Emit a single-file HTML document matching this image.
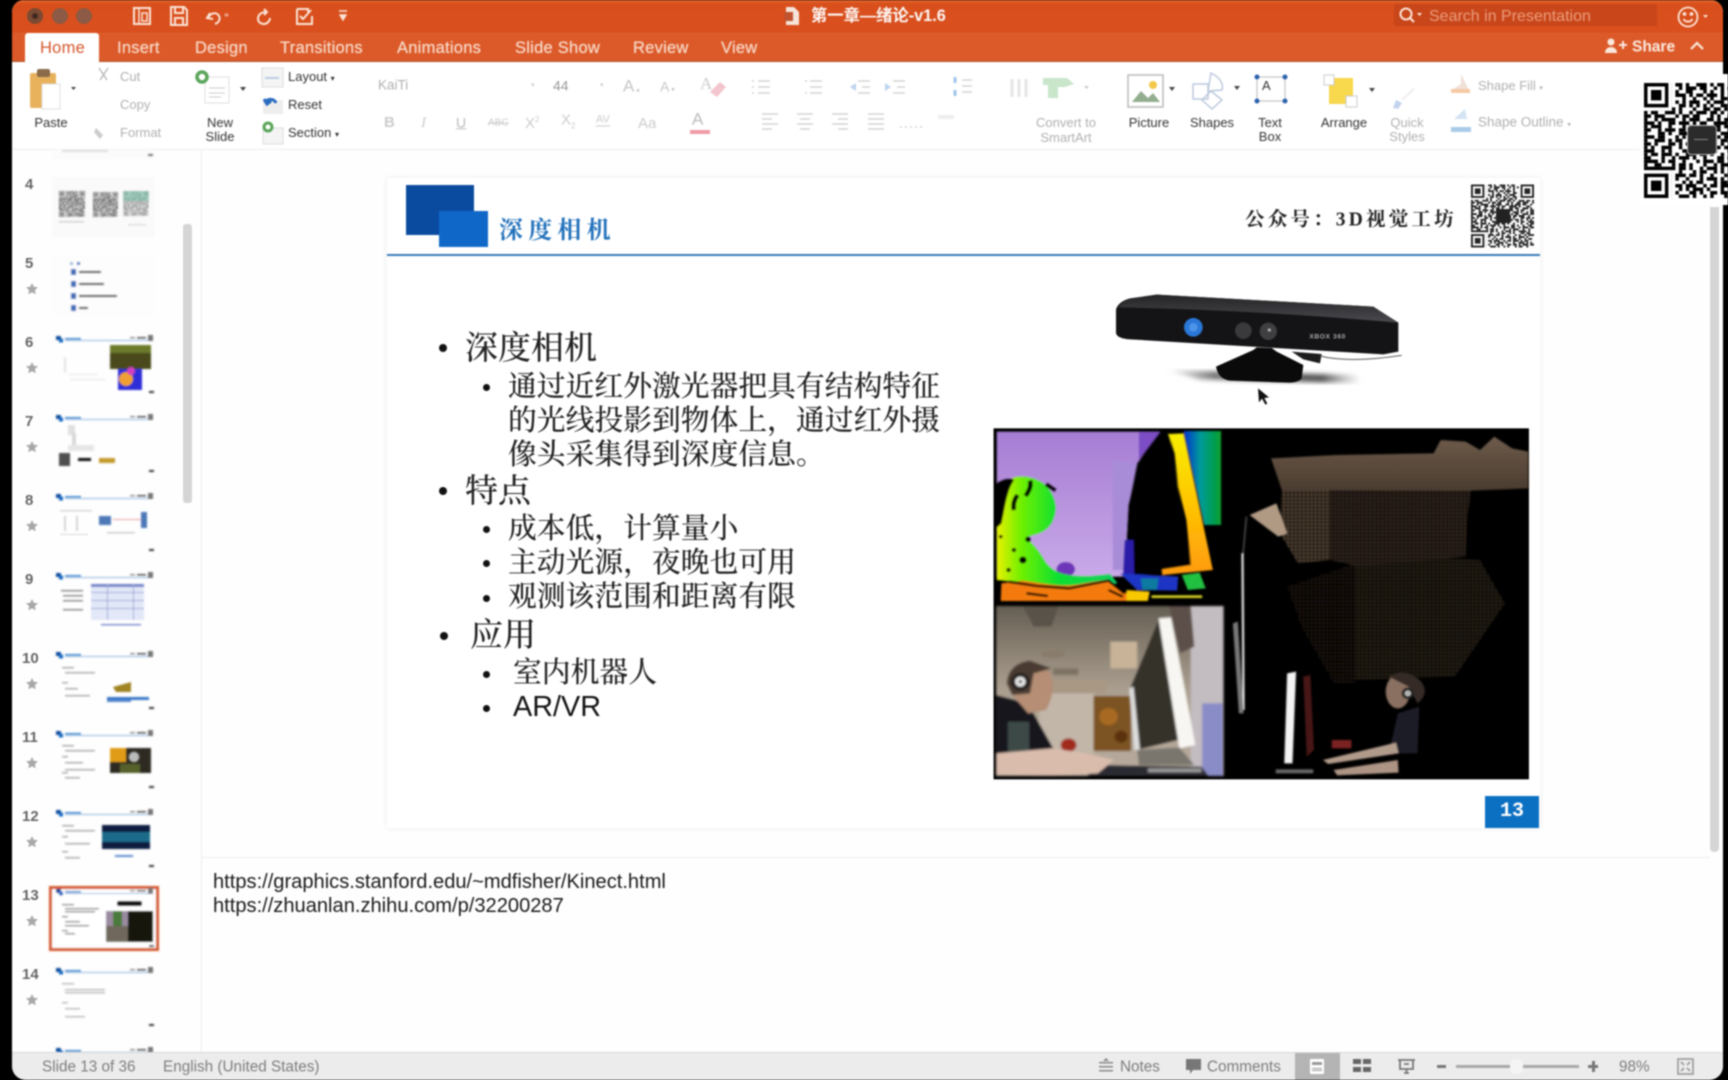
<!DOCTYPE html>
<html lang="zh"><head><meta charset="utf-8"><title>第一章—绪论-v1.6</title>
<style>
html,body{margin:0;padding:0;width:1728px;height:1080px;overflow:hidden;background:#000}
body{font-family:"Liberation Sans","Noto Sans CJK SC",sans-serif;position:relative}
#w{position:absolute;left:0;top:0;width:1728px;height:1080px;filter:blur(.7px)}
#win{position:absolute;left:12px;top:0;width:1711px;height:1080px;background:#fefefe;border-radius:12px 12px 14px 14px;overflow:hidden}
.a{position:absolute}
.t{position:absolute;white-space:nowrap;transform:translateY(-50%);line-height:1.1}
.c{transform:translate(-50%,-50%);text-align:center}
.tab{color:#f8d9c8;font-size:16.5px;top:47.5px;letter-spacing:.25px;text-shadow:0 0 .6px #f8d9c8}
.l{color:#333;font-size:13px}
.g{color:#b0b0b0;font-size:13px}
.st{color:#7d7d7d;font-size:15.3px;top:1067.5px}
.sl{font-family:"Liberation Serif","Noto Serif CJK SC",serif;color:#222;font-weight:500}
.s1{font-size:33px;left:465px}
.s2{font-size:28.8px;left:508px}
.b{position:absolute;border-radius:50%;background:#111}
.b1{width:8px;height:8px;left:439px}
.b2{width:7px;height:7px;left:483px}
svg{position:absolute;overflow:hidden}
</style></head><body>
<svg width="0" height="0" style="left:0;top:0">
<defs>
<symbol id="q" viewBox="0 0 33 33">
<g fill="none" stroke="#000" stroke-width="1">
<path d="M0 .5h33" stroke-dasharray="8 1 2 1 1 2 3 1 1 1 2 3 1 6"/>
<path d="M0 1.5h33" stroke-dasharray="8 2 1 1 3 1 2 2 1 1 1 1 2 8"/>
<path d="M0 2.5h33" stroke-dasharray="8 1 1 2 2 3 1 1 1 2 1 3 1 6"/>
<path d="M0 3.5h33" stroke-dasharray="8 1 3 1 1 1 2 1 3 1 1 2 2 6"/>
<path d="M0 4.5h33" stroke-dasharray="8 3 1 2 1 2 1 1 1 2 2 1 1 7"/>
<path d="M0 5.5h33" stroke-dasharray="8 1 1 1 1 1 3 2 1 1 3 2 1 7"/>
<path d="M0 6.5h33" stroke-dasharray="8 2 2 1 1 1 1 1 1 1 1 2 2 1 1 8"/>
<path d="M0 7.5h33" stroke-dasharray="9 1 1 3 1 2 2 1 2 1 1 2 1 7"/>
<path d="M0 8.5h33" stroke-dasharray="1 1 2 2 3 1 1 2 1 1 3 1 2 1 1 2 3 1 2"/>
<path d="M0 9.5h33" stroke-dasharray="2 1 3 3 1 1 2 1 2 3 1 1 1 2 2 1 3 2"/>
<path d="M0 10.5h33" stroke-dasharray="1 2 1 1 4 2 1 1 3 2 2 1 1 1 3 1 2 2"/>
<path d="M0 11.5h33" stroke-dasharray="3 1 1 2 2 1 3 1 1 1 2 2 4 1 1 3 2"/>
<path d="M0 12.5h33" stroke-dasharray="1 1 3 2 1 3 1 1 2 1 1 3 2 1 2 2 3 1"/>
<path d="M0 13.5h33" stroke-dasharray="2 2 1 1 3 1 2 2 1 2 1 1 3 2 1 1 2 3"/>
<path d="M0 14.5h33" stroke-dasharray="1 3 2 1 1 2 3 1 1 1 2 1 1 2 3 1 1 2 1"/>
<path d="M0 15.5h33" stroke-dasharray="3 1 2 3 1 1 1 2 2 1 3 1 1 1 2 2 3 1"/>
<path d="M0 16.5h33" stroke-dasharray="1 2 3 1 1 1 2 2 1 3 1 2 1 1 2 1 3 2"/>
<path d="M0 17.5h33" stroke-dasharray="2 1 1 3 2 1 1 1 3 1 2 2 1 1 1 3 2 1"/>
<path d="M0 18.5h33" stroke-dasharray="1 1 1 2 3 2 1 3 1 1 2 1 3 1 2 1 1 2"/>
<path d="M0 19.5h33" stroke-dasharray="3 2 1 1 1 3 2 1 2 1 1 2 1 3 1 1 2 2"/>
<path d="M0 20.5h33" stroke-dasharray="1 1 2 1 3 1 1 2 3 1 2 1 1 2 1 3 1 2"/>
<path d="M0 21.5h33" stroke-dasharray="2 3 1 2 1 1 3 1 1 2 1 3 2 1 1 2 1 2"/>
<path d="M0 22.5h33" stroke-dasharray="4 1 1 1 2 2 1 3 1 1 3 1 2 2 1 1 3 1"/>
<path d="M0 23.5h33" stroke-dasharray="1 2 2 3 1 1 2 1 1 3 1 2 1 1 3 2 1 2"/>
<path d="M0 24.5h33" stroke-dasharray="9 1 2 1 1 2 1 1 3 1 1 2 4 1 1 2"/>
<path d="M0 25.5h33" stroke-dasharray="8 2 1 3 1 1 2 2 1 1 1 3 2 1 2 2"/>
<path d="M0 26.5h33" stroke-dasharray="8 1 3 1 2 1 1 2 1 3 1 1 1 2 1 1 3"/>
<path d="M0 27.5h33" stroke-dasharray="8 1 1 2 1 3 1 1 3 1 1 2 3 1 1 3"/>
<path d="M0 28.5h33" stroke-dasharray="8 3 1 1 1 1 2 3 1 1 2 1 1 2 1 1 2 2"/>
<path d="M0 29.5h33" stroke-dasharray="8 1 2 1 3 2 1 1 2 1 3 1 1 1 2 3"/>
<path d="M0 30.5h33" stroke-dasharray="8 2 1 1 1 1 3 1 1 3 1 2 3 1 1 1 1"/>
<path d="M0 31.5h33" stroke-dasharray="8 1 1 3 2 1 1 2 2 1 2 1 1 1 3 1 2"/>
<path d="M0 32.5h33" stroke-dasharray="8 2 3 1 1 2 1 1 1 3 1 1 2 2 1 3"/>
</g>
<g fill="#fff">
<rect width="8" height="8"/><rect x="25" width="8" height="8"/><rect y="25" width="8" height="8"/>
</g>
<g fill="#000">
<path fill-rule="evenodd" d="M0 0h7v7H0zM1 1v5h5V1zM2 2h3v3H2z"/>
<path fill-rule="evenodd" d="M26 0h7v7h-7zM27 1v5h5V1zM28 2h3v3h-3z"/>
<path fill-rule="evenodd" d="M0 26h7v7H0zM1 27v5h5v-5zM2 28h3v3H2z"/>
</g>
</symbol>
<symbol id="h" viewBox="0 0 104 14" overflow="visible">
<rect x="4" y="1" width="5" height="4" fill="#0a4a9a"/><rect x="7" y="3.5" width="4" height="4" fill="#1468c4"/>
<rect x="13" y="5" width="88" height="1" fill="#8db6de"/>
<rect x="13" y="3" width="16" height="1.6" fill="#3f86cc"/>
<rect x="78" y="2" width="5" height="1.4" fill="#888"/><rect x="85" y="2" width="9" height="1.6" fill="#555"/>
<rect x="96" y="0" width="5" height="6" fill="#777"/>
</symbol>
<pattern id="m1" width="11" height="11" patternUnits="userSpaceOnUse">
<rect width="11" height="11" fill="#0b0906"/><rect x="1" y="1" width="7" height="7" rx="2" fill="#2a2118"/>
</pattern>
<pattern id="m0" width="11" height="11" patternUnits="userSpaceOnUse">
<rect width="11" height="11" fill="#060403"/><rect x="1" y="1" width="7" height="7" rx="2" fill="#1a130e"/>
</pattern>
<pattern id="m2" width="11" height="11" patternUnits="userSpaceOnUse">
<rect width="11" height="11" fill="#1e1710"/><rect x="1" y="1" width="7" height="7" rx="2" fill="#5a4a3a"/>
</pattern>
<pattern id="m3" width="11" height="11" patternUnits="userSpaceOnUse">
<rect width="11" height="11" fill="#120d09"/><rect x="1" y="1" width="7" height="7" rx="2" fill="#352a20"/>
</pattern>
<linearGradient id="lav" x1="0" y1="0" x2="0" y2="1"><stop offset="0" stop-color="#a67dd4"/><stop offset="1" stop-color="#c9a9e8"/></linearGradient>
<linearGradient id="yo" x1="0" y1="0" x2="0" y2="1"><stop offset="0" stop-color="#f8ee00"/><stop offset=".5" stop-color="#ffc400"/><stop offset="1" stop-color="#ff9a10"/></linearGradient>
<linearGradient id="bg" x1="0" y1="0" x2="1" y2="0"><stop offset="0" stop-color="#0030d0"/><stop offset=".45" stop-color="#009a9a"/><stop offset="1" stop-color="#08a02c"/></linearGradient>
<linearGradient id="pg" x1="0" y1="0" x2="1" y2="0"><stop offset="0" stop-color="#e8f000"/><stop offset=".2" stop-color="#70f000"/><stop offset=".5" stop-color="#10e030"/><stop offset="1" stop-color="#10d060"/></linearGradient>
<linearGradient id="ph" x1="0" y1="0" x2="0" y2="1"><stop offset="0" stop-color="#655e54"/><stop offset=".25" stop-color="#8a8072"/><stop offset=".5" stop-color="#ab9f90"/><stop offset="1" stop-color="#b8ab9d"/></linearGradient>
<linearGradient id="br" x1="0" y1="0" x2="0" y2="1"><stop offset="0" stop-color="#6d5a4a"/><stop offset="1" stop-color="#4a3c2f"/></linearGradient>
<linearGradient id="top" x1="0" y1="0" x2="0" y2="1"><stop offset="0" stop-color="#242426"/><stop offset="1" stop-color="#4a4a4f"/></linearGradient>
<linearGradient id="sh" x1="0" y1="0" x2="1" y2="0"><stop offset="0" stop-color="#999" stop-opacity="0"/><stop offset=".25" stop-color="#777"/><stop offset=".8" stop-color="#555"/><stop offset="1" stop-color="#999" stop-opacity="0"/></linearGradient>
<filter id="bl1"><feGaussianBlur stdDeviation="3.2"/></filter>
<filter id="bl4"><feGaussianBlur stdDeviation="2"/></filter>
<filter id="bl2"><feGaussianBlur stdDeviation="7"/></filter>
<filter id="bl3"><feGaussianBlur stdDeviation=".7"/></filter>
</defs>
</svg>
<div id="w">
<div id="win"></div>

<!-- title bar -->
<div class="a" style="left:12px;top:0;width:1711px;height:62px;border-radius:12px 12px 0 0;background:linear-gradient(#e4672f 0,#d84f1c 4px,#d94f1d 32px,#dc5a29 33px,#dc5a29 60px,#a8532f 62px)"></div>
<div class="a" style="left:27px;top:8px;width:16px;height:16px;border-radius:50%;background:#7a4a33"></div>
<div class="a" style="left:32px;top:13px;width:6px;height:6px;border-radius:50%;background:#3f2a20"></div>
<div class="a" style="left:52px;top:8px;width:16px;height:16px;border-radius:50%;background:#8c5a45"></div>
<div class="a" style="left:76px;top:8px;width:16px;height:16px;border-radius:50%;background:#8c5a45"></div>
<svg style="left:130px;top:4px" width="230" height="24" viewBox="0 0 230 24" fill="none" stroke="#fbe3d6" stroke-width="2">
<rect x="4" y="4" width="16" height="16"/><path d="M9 4v16M12 9h5v8h-5z" stroke-width="1.5"/>
<path d="M41 3h13l3 3v15H41zM45 3v6h8V3M45 21v-7h8v7"/>
<path d="M80 9l-3 5 6 1M78 14c3-6 9-6 11-2 2 4-1 7-4 8"/>
<path d="M95 11l3 0" stroke-width="3" stroke-dasharray="1 1"/>
<path d="M134 5l3 3-3 3M136 8c-5 0-8 3-8 7 0 3 3 5 6 5s6-3 6-6"/>
<path d="M167 5h11v3M167 5v15h15v-8M170 12l3 3 8-9"/>
<path d="M209 7h8M210 11h6l-3 5z" fill="#fbe3d6" stroke-width="1.4"/>
</svg>
<svg style="left:783px;top:5px" width="18" height="22" viewBox="0 0 18 22"><path d="M3 2h8l5 5v13H3z" fill="#f6e4da"/><path d="M1 7h9v9H1z" fill="#c0532f"/></svg>
<div class="t" style="left:811px;top:16.500px;color:#fff;font-weight:bold;font-size:16.3px;opacity:.95">第一章—绪论-v1.6</div>
<div class="a" style="left:1394px;top:4px;width:263px;height:22px;background:#c8461a;border-radius:2px"></div>
<svg style="left:1398px;top:6px" width="26" height="18" viewBox="0 0 26 18" fill="none" stroke="#fbe3d6" stroke-width="2"><circle cx="8" cy="8" r="5.5"/><path d="M12 12l4 4"/><path d="M19 7l2.500 3 2.500-3z" fill="#fbe3d6" stroke="none"/></svg>
<div class="t" style="left:1429px;top:17px;color:#ec9d7c;font-size:16px">Search in Presentation</div>
<svg style="left:1676px;top:5px" width="36" height="24" viewBox="0 0 36 24" fill="none" stroke="#fbe3d6" stroke-width="1.8"><circle cx="12" cy="12" r="9.500"/><path d="M7.500 14c2 3.500 7 3.500 9 0"/><circle cx="8.500" cy="9" r="1" fill="#fbe3d6"/><circle cx="15.500" cy="9" r="1" fill="#fbe3d6"/><path d="M27 10l2.500 3 2.500-3z" fill="#fbe3d6" stroke="none"/></svg>

<div class="a" style="left:25px;top:33px;width:74px;height:30px;background:#fff;border-radius:3px 3px 0 0"></div>
<div class="t tab" style="left:40px;color:#d4552a;text-shadow:none">Home</div>
<div class="t tab" style="left:117px">Insert</div>
<div class="t tab" style="left:195px">Design</div>
<div class="t tab" style="left:280px">Transitions</div>
<div class="t tab" style="left:397px">Animations</div>
<div class="t tab" style="left:515px">Slide Show</div>
<div class="t tab" style="left:633px">Review</div>
<div class="t tab" style="left:721px">View</div>
<svg style="left:1603px;top:37px" width="26" height="18" viewBox="0 0 26 18" fill="#fbe9de"><circle cx="8" cy="5" r="3.500"/><path d="M2 16c0-8 12-8 12 0z"/><path d="M16 7h3V4h2v3h3v2h-3v3h-2V9h-3z"/></svg>
<div class="t" style="left:1632px;top:47px;color:#fbe9de;font-size:15.500px;font-weight:bold">Share</div>
<svg style="left:1689px;top:41px" width="16" height="10" viewBox="0 0 16 10" fill="none" stroke="#fbe9de" stroke-width="2.200"><path d="M2 8l6-6 6 6"/></svg>

<!-- ribbon -->
<div class="a" style="left:12px;top:62px;width:1711px;height:87px;background:#fff;border-bottom:1px solid #eee"></div>
<svg style="left:25px;top:66px" width="60" height="46" viewBox="0 0 60 46">
<rect x="5" y="7" width="26" height="35" rx="2" fill="#e8b25c"/><rect x="12" y="3" width="13" height="8" rx="2" fill="#8a6a48"/>
<path d="M17 18h18v25H17z" fill="#fff" stroke="#ddd"/><path d="M46 21h5l-2.500 3z" fill="#444"/></svg>
<div class="t c l" style="left:51px;top:123px">Paste</div>
<svg style="left:96px;top:66px" width="16" height="16" viewBox="0 0 16 16" fill="none" stroke="#bbb" stroke-width="1.500"><path d="M3 2l8 12M12 2L4 14"/></svg>
<div class="t g" style="left:120px;top:77px">Cut</div>
<div class="t g" style="left:120px;top:105px">Copy</div>
<div class="t g" style="left:120px;top:133px">Format</div>
<svg style="left:92px;top:126px" width="18" height="16" viewBox="0 0 18 16"><path d="M4 2l7 7-3 4-6-7z" fill="#ccc"/></svg>
<svg style="left:193px;top:68px" width="60" height="38" viewBox="0 0 60 38"><rect x="12" y="9" width="24" height="26" fill="#fff" stroke="#ddd"/><path d="M16 20h16M16 25h16M16 29h12" stroke="#ccc"/><circle cx="9" cy="9" r="5" fill="#fff" stroke="#59a55a" stroke-width="3.500"/><path d="M47 19h6l-3 4z" fill="#444"/></svg>
<div class="t c l" style="left:220px;top:123px">New</div>
<div class="t c l" style="left:220px;top:137px">Slide</div>
<svg style="left:260px;top:66px" width="26" height="82" viewBox="0 0 26 82">
<rect x="2" y="2" width="21" height="19" fill="#f4f4f4" stroke="#ddd"/><path d="M5 12h14" stroke="#b9cde6" stroke-width="2"/>
<rect x="3" y="34" width="20" height="14" fill="#eee"/><path d="M5 37a6 6 0 0 1 11 0M4 33l3 5 4-3" stroke="#2a6cc0" stroke-width="3" fill="none"/>
<rect x="3" y="62" width="20" height="16" fill="#f4f4f4" stroke="#ddd"/><circle cx="8" cy="61" r="4" fill="#fff" stroke="#59a55a" stroke-width="3"/></svg>
<div class="t l" style="left:288px;top:77px">Layout <span style="font-size:8px">▾</span></div>
<div class="t l" style="left:288px;top:105px">Reset</div>
<div class="t l" style="left:288px;top:133px">Section <span style="font-size:8px">▾</span></div>
<div class="t g" style="left:378px;top:86px;font-size:13.500px">KaiTi</div>
<div class="t g" style="left:553px;top:86px;font-size:14px;color:#999">44</div>
<div class="t g" style="left:531px;top:86px;font-size:7px;color:#ccc">▾</div>
<div class="t g" style="left:600px;top:86px;font-size:7px;color:#ccc">▾</div>
<div class="t g" style="left:623px;top:87px;font-size:17px;color:#c6c6c6">A<span style="font-size:7px"> ▴</span></div>
<div class="t g" style="left:660px;top:87px;font-size:14px;color:#c6c6c6">A<span style="font-size:7px"> ▾</span></div>
<svg style="left:698px;top:72px" width="32" height="28" viewBox="0 0 32 28"><text x="2" y="17" font-size="17" fill="#ccc" font-family="Liberation Serif">A</text><path d="M12 20l10-10 6 5-9 10z" fill="#f3c5cc"/></svg>
<div class="t g" style="left:384px;top:123px;font-size:15px;font-weight:bold;color:#ccc">B</div>
<div class="t g" style="left:421px;top:123px;font-size:15px;font-style:italic;color:#ccc;font-family:'Liberation Serif'">I</div>
<div class="t g" style="left:456px;top:123px;font-size:14px;color:#bbb;text-decoration:underline">U</div>
<div class="t g" style="left:488px;top:123px;font-size:10px;color:#ccc;text-decoration:line-through">ABC</div>
<div class="t g" style="left:525px;top:124px;font-size:15px;color:#ccc">X<sup style="font-size:8px">2</sup></div>
<div class="t g" style="left:561px;top:122px;font-size:15px;color:#ccc">X<sub style="font-size:8px">2</sub></div>
<div class="t g" style="left:596px;top:120px;font-size:11px;color:#ccc;border-bottom:1px solid #ccc">AV</div>
<div class="t g" style="left:638px;top:124px;font-size:15px;color:#ccc">Aa</div>
<div class="t g" style="left:692px;top:120px;font-size:17px;color:#bbb">A</div>
<div class="a" style="left:690px;top:130px;width:20px;height:4px;background:#ef9ba6"></div>
<svg style="left:750px;top:72px" width="330" height="62" viewBox="0 0 330 62" fill="none" stroke="#d4d4d4" stroke-width="1.500">
<path d="M8 9h12M8 15h12M8 21h12M2 9h2M2 15h2M2 21h2"/><path d="M60 9h12M60 15h12M60 21h12M55 9h2M55 21h2"/>
<path d="M108 9h12M112 15h8M108 21h12"/><path d="M100 15l6-4v8z" fill="#bcd4ee" stroke="none"/>
<path d="M143 9h12M147 15h8M143 21h12"/><path d="M141 15l-6-4v8z" fill="#bcd4ee" stroke="none"/>
<path d="M212 8h10M212 14h10M212 20h10"/><path d="M205 5v6M205 18v6" stroke="#9fc5ea" stroke-width="3"/>
<path d="M262 7v18M269 7v18M276 7v18" stroke="#e6e6e6" stroke-width="3"/>
<path d="M12 42h16M12 47h10M12 52h16M12 57h10"/><path d="M47 42h16M50 47h10M47 52h16M50 57h10"/><path d="M82 42h16M88 47h10M82 52h16M88 57h10"/><path d="M118 42h16M118 47h16M118 52h16M118 57h16"/>
<path d="M150 55h24" stroke-dasharray="2 3"/><path d="M188 45h16" stroke="#eee" stroke-width="4"/>
</svg>
<svg style="left:1040px;top:76px" width="50" height="24" viewBox="0 0 50 24"><path d="M3 2h24l7 6-9 3h-7v11H8V9H3z" fill="#c9e6cb"/><path d="M44 10h5l-2.500 3z" fill="#ccc"/></svg>
<div class="t c g" style="left:1066px;top:123px">Convert to</div>
<div class="t c g" style="left:1066px;top:138px">SmartArt</div>
<svg style="left:1127px;top:74px" width="50" height="34" viewBox="0 0 50 34"><rect x="1" y="1" width="35" height="32" fill="#fff" stroke="#bbb" stroke-width="1.500"/><path d="M5 28l9-11 7 7 5-5 7 9z" fill="#93ad8f"/><circle cx="26" cy="11" r="4" fill="#f3c84a"/><path d="M42 13h6l-3 4z" fill="#444"/></svg>
<div class="t c l" style="left:1149px;top:123px">Picture</div>
<svg style="left:1190px;top:72px" width="52" height="38" viewBox="0 0 52 38" fill="#fff" stroke="#bcc9dc" stroke-width="1.500"><path d="M3 12h15v15H3zM21 1c8 4 13 10 11 17l-14 1zM21 19l11 9-10 9-10-9z"/><path d="M44 14h6l-3 4z" fill="#444" stroke="none"/></svg>
<div class="t c l" style="left:1212px;top:123px">Shapes</div>
<svg style="left:1253px;top:73px" width="36" height="32" viewBox="0 0 36 32" fill="#2b62ad"><path d="M4 4h28v24H4z" fill="#fff" stroke="#bbb"/><circle cx="4" cy="4" r="2.500"/><circle cx="32" cy="4" r="2.500"/><circle cx="4" cy="28" r="2.500"/><circle cx="32" cy="28" r="2.500"/><text x="9" y="17" font-size="13" font-family="Liberation Sans" fill="#333">A</text></svg>
<div class="t c l" style="left:1270px;top:123px">Text</div>
<div class="t c l" style="left:1270px;top:137px">Box</div>
<svg style="left:1322px;top:74px" width="56" height="34" viewBox="0 0 56 34"><rect x="7" y="4" width="24" height="26" fill="#f8d84c"/><rect x="2" y="1" width="10" height="10" fill="#fff" stroke="#ccc"/><rect x="24" y="22" width="11" height="11" fill="#fff" stroke="#ccc"/><path d="M47 14h6l-3 4z" fill="#444"/></svg>
<div class="t c l" style="left:1344px;top:123px">Arrange</div>
<svg style="left:1390px;top:86px" width="36" height="24" viewBox="0 0 36 24"><path d="M3 22l3-8 6 3-4 6z" fill="#c2d4ec"/><path d="M12 14L24 3" stroke="#eee" stroke-width="2"/></svg>
<div class="t c g" style="left:1407px;top:123px">Quick</div>
<div class="t c g" style="left:1407px;top:137px">Styles</div>
<svg style="left:1448px;top:72px" width="26" height="64" viewBox="0 0 26 64"><path d="M13 2v10l-9 6h17z" fill="#f0e0d8"/><rect x="3" y="17" width="19" height="4" fill="#f7c9a4"/><path d="M6 47L17 37l2 10z" fill="#d3e3f3"/><rect x="3" y="55" width="20" height="5" fill="#a9cbe8"/></svg>
<div class="t g" style="left:1478px;top:86px">Shape Fill <span style="font-size:7px">▾</span></div>
<div class="t g" style="left:1478px;top:123px;font-size:13.500px">Shape Outline <span style="font-size:7px">▾</span></div>

<!-- QR corner -->
<div class="a" style="left:1640px;top:74px;width:88px;height:131px;background:#fff"></div>
<svg style="left:1644px;top:83px" width="115" height="115"><use href="#q" width="115" height="115"/></svg>
<div class="a" style="left:1687px;top:125px;width:28px;height:28px;background:#2b2b2b;border-radius:4px;border:1px solid #bbb"></div>
<div class="a" style="left:1694px;top:139px;width:14px;height:1px;background:#888"></div>

<!-- left pane -->
<svg style="left:12px;top:149px" width="190" height="903" viewBox="12 149 190 903">
<g filter="url(#bl3)">
<rect x="52" y="150" width="103" height="9" fill="#fbfbfb"/><rect x="62" y="150" width="46" height="2" fill="#ddd"/><rect x="148" y="154" width="5" height="2" fill="#333"/>
<rect x="52" y="177" width="103" height="61" fill="#fafafa"/>
<use href="#q" x="59" y="191" width="26" height="26"/><use href="#q" x="93" y="192" width="25" height="25"/><use href="#q" x="123" y="191" width="26" height="25" opacity=".6"/>
<rect x="123" y="191" width="26" height="10" fill="#7ac9ae" opacity=".55"/>
<rect x="59" y="221" width="25" height="1.500" fill="#ccc"/><rect x="128" y="224" width="18" height="1.500" fill="#ddd"/>

<rect x="52" y="256" width="103" height="61" fill="#fdfdfd"/>
<g fill="#3a69b8"><rect x="70" y="262" width="3" height="3" opacity=".5"/><rect x="77" y="262" width="3" height="3"/><rect x="71" y="269" width="5" height="6"/><rect x="71" y="281" width="5" height="6"/><rect x="71" y="293" width="5" height="6"/><rect x="71" y="305" width="5" height="6"/></g>
<g fill="#222"><rect x="79" y="271" width="22" height="2"/><rect x="79" y="283" width="25" height="2"/><rect x="79" y="295" width="38" height="2"/><rect x="79" y="307" width="9" height="2"/></g>

<use href="#h" x="52" y="335" width="104" height="14"/>
<rect x="110" y="345" width="41" height="24" fill="#4a4a1c"/><rect x="110" y="345" width="41" height="8" fill="#6b7a2c"/><rect x="118" y="369" width="24" height="21" fill="#2d2ed8"/><circle cx="126" cy="379" r="7" fill="#f0a030"/><circle cx="131" cy="371" r="4" fill="#d040c0"/>
<g fill="#e4e4e4"><rect x="64" y="357" width="2" height="16"/><rect x="68" y="374" width="30" height="1"/><rect x="70" y="379" width="36" height="1"/></g><rect x="149" y="391" width="5" height="2" fill="#333"/>

<use href="#h" x="52" y="414" width="104" height="14"/>
<rect x="68" y="425" width="7" height="10" fill="#e0e0e0"/><rect x="72" y="433" width="4" height="16" fill="#d8d8d8"/><rect x="68" y="445" width="26" height="6" fill="#e6e6e6"/>
<rect x="59" y="453" width="11" height="13" fill="#4f4f4f"/><rect x="78" y="458" width="13" height="3" fill="#111"/><rect x="99" y="458" width="16" height="5" fill="#c49a2e"/><rect x="149" y="470" width="5" height="2" fill="#333"/>

<use href="#h" x="52" y="493" width="104" height="14"/>
<g fill="#d4d4d4"><rect x="60" y="510" width="32" height="1.500"/><rect x="64" y="516" width="2" height="15"/><rect x="76" y="516" width="2" height="15"/><rect x="60" y="534" width="28" height="1"/></g>
<rect x="99" y="516" width="12" height="9" fill="#4d78b8"/><rect x="141" y="512" width="6" height="16" fill="#4d78b8"/><rect x="113" y="519" width="28" height="1" fill="#e8a0a0"/><rect x="107" y="532" width="28" height="1.500" fill="#ccc"/><rect x="149" y="549" width="5" height="2" fill="#333"/>

<use href="#h" x="52" y="572" width="104" height="14"/>
<rect x="91" y="584" width="53" height="36" fill="#e3e8f8"/><rect x="91" y="584" width="53" height="3" fill="#7583c8"/><g fill="#9aa6d8"><rect x="91" y="592" width="53" height="1"/><rect x="91" y="600" width="53" height="1"/><rect x="91" y="608" width="53" height="1"/><rect x="107" y="584" width="1" height="36"/><rect x="133" y="584" width="1" height="36"/></g><g fill="#888"><rect x="61" y="590" width="22" height="1.500"/><rect x="63" y="595" width="20" height="1.500"/><rect x="63" y="600" width="20" height="1.500"/><rect x="63" y="609" width="20" height="1.500"/></g><rect x="101" y="624" width="40" height="1.500" fill="#7a8ad0"/>

<use href="#h" x="52" y="651" width="104" height="14"/>
<g fill="#aaa"><rect x="62" y="667" width="12" height="1.500"/><rect x="65" y="672" width="30" height="1.500"/><rect x="62" y="682" width="6" height="1.500"/><rect x="65" y="688" width="13" height="1.500"/><rect x="65" y="695" width="25" height="1.500"/></g>
<path d="M113 687l18-5v10h-15z" fill="#a08420"/><rect x="107" y="697" width="42" height="3" fill="#3a78c8"/><rect x="107" y="700" width="24" height="2" fill="#5588cc"/><rect x="149" y="707" width="5" height="2" fill="#333"/>

<use href="#h" x="52" y="730" width="104" height="14"/>
<g fill="#aaa"><rect x="62" y="745" width="12" height="1.500"/><rect x="65" y="750" width="30" height="1.500"/><rect x="62" y="756" width="6" height="1.500"/><rect x="65" y="762" width="18" height="1.500"/><rect x="65" y="769" width="30" height="1.500"/><rect x="62" y="772" width="6" height="1.500"/><rect x="65" y="777" width="15" height="1.500"/></g>
<rect x="110" y="748" width="41" height="25" fill="#2f2c22"/><rect x="110" y="748" width="16" height="14" fill="#e09c18"/><circle cx="134" cy="757" r="5" fill="#bbb"/><rect x="120" y="764" width="20" height="9" fill="#55602a"/><rect x="149" y="786" width="5" height="2" fill="#333"/>

<use href="#h" x="52" y="809" width="104" height="14"/>
<g fill="#aaa"><rect x="62" y="825" width="12" height="1.500"/><rect x="65" y="830" width="30" height="1.500"/><rect x="62" y="836" width="6" height="1.500"/><rect x="65" y="843" width="25" height="1.500"/><rect x="62" y="851" width="6" height="1.500"/><rect x="65" y="857" width="15" height="1.500"/></g>
<rect x="102" y="825" width="48" height="24" fill="#0a1a40"/><rect x="102" y="832" width="48" height="10" fill="#1a6a8a"/><rect x="115" y="855" width="18" height="2" fill="#5a8ad0"/><rect x="149" y="865" width="5" height="2" fill="#333"/>

<rect x="50.500" y="887.500" width="107" height="62" fill="#fff" stroke="#d4572a" stroke-width="3"/>
<use href="#h" x="52" y="888" width="104" height="14"/>
<g fill="#888"><rect x="62" y="904" width="12" height="1.500"/><rect x="65" y="908" width="34" height="1.500"/><rect x="65" y="911" width="30" height="1.500"/><rect x="62" y="916" width="6" height="1.500"/><rect x="65" y="921" width="15" height="1.500"/><rect x="65" y="925" width="24" height="1.500"/><rect x="62" y="930" width="6" height="1.500"/><rect x="65" y="933" width="10" height="1.500"/></g>
<rect x="117" y="901" width="25" height="5" rx="2" fill="#111"/>
<rect x="106" y="911" width="47" height="31" fill="#151310"/><rect x="106" y="911" width="22" height="15" fill="#9a8aa0"/><rect x="106" y="926" width="22" height="16" fill="#70685c"/><rect x="113" y="911" width="9" height="15" fill="#4a7a3a"/>
<rect x="149" y="945" width="5" height="2" fill="#333"/>

<use href="#h" x="52" y="967" width="104" height="14"/>
<g fill="#bbb"><rect x="62" y="983" width="12" height="1.500"/><rect x="65" y="989" width="40" height="1.500"/><rect x="65" y="992" width="40" height="1.500"/><rect x="62" y="1002" width="6" height="1.500"/><rect x="65" y="1008" width="15" height="1.500"/><rect x="65" y="1016" width="20" height="1.500"/></g><rect x="149" y="1024" width="5" height="2" fill="#333"/>
<use href="#h" x="52" y="1047" width="104" height="14"/>
</g>
<g fill="#a8a8a8">
<path id="s" d="M32 283l1.800 3.800 4.200.500-3.100 2.800.8 4.100-3.700-2-3.700 2 .8-4.100-3.100-2.800 4.200-.500z"/>
<use href="#s" y="79"/><use href="#s" y="158"/><use href="#s" y="237"/><use href="#s" y="316"/><use href="#s" y="395"/><use href="#s" y="474"/><use href="#s" y="553"/><use href="#s" y="632"/><use href="#s" y="711"/>
</g>
<rect x="183" y="224" width="9" height="279" rx="3" fill="#d5d5d5"/>
<rect x="201" y="149" width="1" height="903" fill="#eeeeee"/>
</svg>
<div class="t" style="left:25px;top:185px;font-size:15px;color:#666;font-weight:bold">4</div>
<div class="t" style="left:25px;top:264px;font-size:15px;color:#666;font-weight:bold">5</div>
<div class="t" style="left:25px;top:343px;font-size:15px;color:#666;font-weight:bold">6</div>
<div class="t" style="left:25px;top:422px;font-size:15px;color:#666;font-weight:bold">7</div>
<div class="t" style="left:25px;top:501px;font-size:15px;color:#666;font-weight:bold">8</div>
<div class="t" style="left:25px;top:580px;font-size:15px;color:#666;font-weight:bold">9</div>
<div class="t" style="left:22px;top:659px;font-size:15px;color:#666;font-weight:bold">10</div>
<div class="t" style="left:22px;top:738px;font-size:15px;color:#666;font-weight:bold">11</div>
<div class="t" style="left:22px;top:817px;font-size:15px;color:#666;font-weight:bold">12</div>
<div class="t" style="left:22px;top:896px;font-size:15px;color:#666;font-weight:bold">13</div>
<div class="t" style="left:22px;top:975px;font-size:15px;color:#666;font-weight:bold">14</div>

<!-- main slide -->
<div class="a" style="left:387px;top:178px;width:1153px;height:650px;background:#fff;box-shadow:0 0 6px rgba(0,0,0,.07)"></div>
<div class="a" style="left:406px;top:185px;width:68px;height:50px;background:#0a4a9f"></div>
<div class="a" style="left:439px;top:211px;width:49px;height:36px;background:#0f68c8"></div>
<div class="a" style="left:387px;top:253.500px;width:1153px;height:2.500px;background:#3679b5"></div>
<div class="t" style="left:499px;top:231px;font-family:'Liberation Serif','Noto Serif CJK SC',serif;font-size:24px;letter-spacing:5.200px;color:#2372bb;font-weight:bold">深度相机</div>
<div class="t" style="left:1245px;top:220px;font-family:'Liberation Serif','Noto Serif CJK SC',serif;font-size:19.500px;letter-spacing:3.200px;color:#222;font-weight:bold">公众号&#65306;3D视觉工坊</div>
<svg style="left:1471px;top:184px" width="63" height="64"><use href="#q" width="63" height="64" opacity=".85"/><rect x="25" y="25" width="14" height="14" fill="#222"/></svg>

<div class="b b1" style="top:344px"></div>
<div class="t sl s1" style="top:348.500px">深度相机</div>
<div class="b b2" style="top:384px"></div>
<div class="t sl s2" style="top:387.500px">通过近红外激光器把具有结构特征</div>
<div class="t sl s2" style="top:421.500px">的光线投影到物体上&#65292;通过红外摄</div>
<div class="t sl s2" style="top:456px">像头采集得到深度信息。</div>
<div class="b b1" style="top:487px"></div>
<div class="t sl s1" style="top:491.500px">特点</div>
<div class="b b2" style="top:526px"></div>
<div class="t sl s2" style="top:529.500px">成本低&#65292;计算量小</div>
<div class="b b2" style="top:560px"></div>
<div class="t sl s2" style="top:563.500px">主动光源&#65292;夜晚也可用</div>
<div class="b b2" style="top:595px"></div>
<div class="t sl s2" style="top:598px">观测该范围和距离有限</div>
<div class="b b1" style="top:632px;left:440px"></div>
<div class="t sl s1" style="top:635.500px;left:470px">应用</div>
<div class="b b2" style="top:671px;left:483px"></div>
<div class="t sl s2" style="top:673.500px;left:513px">室内机器人</div>
<div class="b b2" style="top:705px;left:483px"></div>
<div class="t" style="top:708px;left:513px;font-size:28.800px;color:#111">AR/VR</div>

<!-- kinect -->
<svg style="left:1090px;top:170px" width="460" height="240" viewBox="0 0 1380 720">
<path d="M225 600L800 615 815 640 330 628z" fill="url(#sh)" filter="url(#bl2)"/>
<path d="M378 590L490 540 500 532 545 534 560 545 640 585 635 625Q625 638 595 638L420 632Q385 628 378 590z" fill="#0a0a0b"/>
<path d="M605 545L695 552 690 580 640 568z" fill="#1c1c1c"/>
<path d="M690 558Q780 580 935 556" fill="none" stroke="#555" stroke-width="3"/>
<path d="M78 418Q85 395 120 385L200 374 850 410 925 458 925 545 880 553 120 508Q82 505 78 490z" fill="#141416"/>
<path d="M85 412Q100 392 125 385L200 374 850 410 922 458Q500 420 85 412z" fill="url(#top)"/>
<circle cx="310" cy="472" r="28" fill="#2a77d8"/><circle cx="310" cy="472" r="13" fill="#4c94e8"/>
<circle cx="460" cy="482" r="25" fill="#3a3a3c"/><circle cx="535" cy="484" r="26" fill="#3f3f41"/><circle cx="538" cy="480" r="5" fill="#aaa"/>
<text x="658" y="505" font-size="20" font-family="Liberation Sans" font-weight="bold" fill="#aaa" textLength="108">XBOX 360</text>
<path d="M504 655l3 42 9-11 10 18 6-3-9-17 14-2z" fill="#111"/>
</svg>

<!-- composite image -->
<svg style="left:980px;top:420px" width="560" height="370" viewBox="0 0 1568 1110" preserveAspectRatio="none">
<rect x="38" y="25" width="1499" height="1053" fill="#000"/>
<g filter="url(#bl4)">
<path d="M47 35H500L440 130 415 255 405 470H47z" fill="url(#lav)"/>
<polygon points="370,120 440,130 415,260 405,450 372,450" fill="#a98cd8"/>
<polygon points="445,35 505,35 445,120" fill="#7c4ec4"/>
<polygon points="570,33 675,33 675,315 628,315" fill="url(#bg)"/>
<path d="M505 38L530 40 590 445 405 470 415 255 445 125z" fill="#000"/>
<path d="M528 42L570 40 652 450 510 465 510 448 590 435 578 300 555 200 545 100z" fill="url(#yo)"/>
<ellipse cx="240" cy="448" rx="26" ry="22" fill="#6d36b8"/>
<path d="M47 310C45 220 60 180 105 170 150 165 205 190 212 260 212 300 195 335 150 345L130 352C145 370 165 390 180 420 200 455 230 470 310 468L365 462 385 490C330 495 250 505 200 498L47 480z" fill="url(#pg)"/>
<path d="M45 190C65 175 85 172 95 180 75 210 70 260 60 310L45 325z" fill="#000"/>
<path d="M140 182C145 200 135 215 128 228M185 192L212 212M105 225C95 240 92 255 95 270" stroke="#000" stroke-width="12" fill="none"/>
<circle cx="120" cy="420" r="10" fill="#000"/><circle cx="95" cy="390" r="6" fill="#000"/><circle cx="80" cy="450" r="6" fill="#000"/><circle cx="135" cy="358" r="8" fill="#000"/><circle cx="58" cy="350" r="5" fill="#000"/>
<path d="M60 490L120 482C180 490 230 505 290 490L360 478 410 520 420 543H58z" fill="#f47a10"/>
<path d="M80 485L160 498 250 505 360 482 405 520M130 520L190 528M360 510L400 530" stroke="#000" stroke-width="7" fill="none"/>
<polygon points="410,510 475,515 470,543 410,543" fill="#f8c800"/>
<polygon points="405,360 430,360 432,465 400,470" fill="#2a1ea8"/>
<polygon points="392,460 555,470 552,512 440,510" fill="#1c34c4"/><polygon points="450,475 500,475 495,510 455,510" fill="#0a7aa0"/>
<polygon points="565,465 615,458 632,505 582,510" fill="#20c040"/>
<rect x="480" y="526" width="142" height="8" fill="#d8d820"/>
</g>
<g filter="url(#bl1)">
<rect x="45" y="558" width="637" height="510" fill="url(#ph)"/>
<polygon points="120,558 220,558 200,620 150,620" fill="#5a5348"/>
<rect x="590" y="558" width="92" height="510" fill="#c3bcc0"/>
<polygon points="530,558 590,558 600,680 560,700" fill="#5c5048"/>
<rect x="365" y="665" width="75" height="80" fill="#c8b398"/>
<ellipse cx="205" cy="702" rx="35" ry="12" fill="#8a7c6c"/>
<rect x="165" y="800" width="155" height="200" fill="#c2b6a9"/><rect x="165" y="780" width="190" height="40" fill="#a89884"/><rect x="205" y="745" width="70" height="20" fill="#7e7262"/>
<rect x="318" y="828" width="105" height="165" fill="#7c5220"/><circle cx="360" cy="890" r="26" fill="#a86a20"/><circle cx="395" cy="950" r="18" fill="#5a3210"/><ellipse cx="248" cy="975" rx="22" ry="20" fill="#a02a1e"/>
<polygon points="500,600 422,800 440,990 555,960" fill="#35302a"/>
<polygon points="418,805 430,800 448,990 432,990" fill="#ddd"/>
<polygon points="500,595 535,592 603,975 558,985" fill="#f8f6f2"/>
<polygon points="440,990 558,982 600,1035 445,1035" fill="#7a766e"/>
<rect x="622" y="850" width="58" height="218" fill="#8a8cc8"/>
<polygon points="330,1035 620,1040 640,1068 300,1068" fill="#2c2c30"/><rect x="470" y="1045" width="150" height="12" fill="#999"/>
<polygon points="45,825 100,840 150,880 205,985 140,1012 45,1005" fill="#14141c"/>
<rect x="78" y="905" width="60" height="95" fill="#3c4a46"/>
<path d="M95 770C100 740 160 730 195 755 210 790 205 830 185 870L135 880 95 830z" fill="#b58e74"/>
<path d="M75 790Q80 730 140 722L200 745 150 760 140 820 90 825z" fill="#4a3a30"/>
<circle cx="113" cy="785" r="25" fill="#111"/><circle cx="113" cy="785" r="15" fill="#f0f0f0"/><circle cx="113" cy="785" r="5" fill="#111"/>
<polygon points="45,1000 200,985 300,1000 375,1020 330,1060 200,1068 45,1065" fill="#d9bcac"/>
</g>
<g filter="url(#bl4)">
<polygon points="860,500 1050,430 1050,790 990,790 900,620" fill="url(#m0)"/>
<polygon points="1050,400 1400,420 1470,550 1330,770 1050,780" fill="url(#m1)"/>
<polygon points="980,205 1375,210 1365,290 1360,410 1060,440 980,420" fill="url(#m3)"/>
<polygon points="845,200 980,200 980,420 890,430 840,340" fill="url(#m2)"/>
<polygon points="815,115 1000,105 1270,100 1290,60 1360,65 1400,90 1440,50 1490,85 1535,95 1535,205 1375,212 980,210 845,210" fill="url(#br)"/>
<polygon points="755,285 830,250 860,340 835,350" fill="#b09a84"/>
<path d="M746 290L735 420" stroke="#555" stroke-width="4" fill="none"/>
<path d="M735 400L738 870" stroke="#f0f0f0" stroke-width="6" fill="none"/>
<polygon points="708,610 722,605 738,880 725,880" fill="#777"/>
<polygon points="860,760 885,755 875,1030 852,1030" fill="#f4f4f4"/>
<polygon points="905,770 925,765 935,990 915,1010" fill="#4a1414"/>
<rect x="985" y="960" width="55" height="25" fill="#7a2020"/>
<ellipse cx="1170" cy="815" rx="34" ry="50" fill="#8a7060"/>
<path d="M1145 770Q1190 740 1235 785 1260 820 1225 850L1200 800z" fill="#352b25"/>
<circle cx="1198" cy="820" r="17" fill="#222"/><circle cx="1198" cy="820" r="8" fill="#ddd"/><circle cx="1198" cy="820" r="3" fill="#111"/>
<polygon points="1150,975 1170,880 1230,860 1225,1000 1160,1000" fill="#1b1b27"/>
<polygon points="960,1020 1165,968 1172,1000 975,1032" fill="#b09a8a"/>
<polygon points="990,1050 1170,1020 1172,1058 1000,1066" fill="#ad9484"/>
<rect x="828" y="1048" width="105" height="12" fill="#666"/>
</g>
</svg>
<div class="a" style="left:1485px;top:796px;width:54px;height:32px;background:#0b6fc2"></div>
<div class="t c" style="left:1512px;top:812px;color:#fff;font-size:20px;font-weight:bold;font-family:'Liberation Mono',monospace">13</div>

<!-- main chrome -->
<div class="a" style="left:1710px;top:207px;width:9px;height:645px;background:#d5d5d5;border-radius:0 0 4px 4px"></div>
<div class="a" style="left:202px;top:857px;width:1508px;height:1px;background:#eeeeee"></div>
<div class="t" style="left:213px;top:882px;font-size:20.100px;color:#1a1a1a">https://graphics.stanford.edu/~mdfisher/Kinect.html</div>
<div class="t" style="left:213px;top:905.500px;font-size:20.100px;color:#1a1a1a">https://zhuanlan.zhihu.com/p/32200287</div>

<!-- status -->
<div class="a" style="left:12px;top:1052px;width:1711px;height:28px;background:#ececec;border-top:1px solid #d8d8d8;box-sizing:border-box;border-radius:0 0 14px 14px"></div>
<div class="t st" style="left:42px">Slide 13 of 36</div>
<div class="t st" style="left:163px">English (United States)</div>
<svg style="left:1096px;top:1058px" width="20" height="16" viewBox="0 0 20 16" fill="#888"><path d="M3 4h14v1.500H3zM3 8h14v1.500H3zM3 12h14v1.500H3zM10 0l3 3H7z"/></svg>
<div class="t st" style="left:1120px">Notes</div>
<svg style="left:1185px;top:1059px" width="17" height="15" viewBox="0 0 17 15" fill="#777"><path d="M1 0h15v11H8l-3 4v-4H1z"/></svg>
<div class="t st" style="left:1207px">Comments</div>
<div class="a" style="left:1295px;top:1053px;width:45px;height:27px;background:#b4b4b4"></div>
<svg style="left:1308px;top:1058px" width="18" height="17" viewBox="0 0 18 17"><rect x="2" y="1" width="14" height="15" rx="1" fill="#fff"/><path d="M4 4h10v3H4zM4 10h10v1H4zM4 12h10v1H4z" fill="#999"/></svg>
<svg style="left:1352px;top:1059px" width="20" height="14" viewBox="0 0 20 14" fill="#666"><rect width="8" height="5" x="1"/><rect width="8" height="5" x="11"/><rect width="8" height="5" x="1" y="8"/><rect width="8" height="5" x="11" y="8"/></svg>
<svg style="left:1397px;top:1058px" width="19" height="17" viewBox="0 0 19 17" fill="none" stroke="#777" stroke-width="1.800"><path d="M1 2h17M3 2v9h13V2M9.500 11v4M7 15h5M7 6h5"/></svg>
<div class="a" style="left:1437px;top:1065px;width:9px;height:3px;background:#777"></div>
<div class="a" style="left:1456px;top:1065px;width:123px;height:3px;background:#a8a8a8"></div>
<div class="a" style="left:1510px;top:1059px;width:13px;height:15px;background:#f4f4f4;border-radius:5px"></div>
<div class="a" style="left:1588px;top:1065px;width:10px;height:3px;background:#777"></div>
<div class="a" style="left:1591.500px;top:1061px;width:3px;height:11px;background:#777"></div>
<div class="t st" style="left:1619px">98%</div>
<svg style="left:1677px;top:1058px" width="17" height="17" viewBox="0 0 17 17" fill="none" stroke="#999" stroke-width="1.600"><rect x="1" y="1" width="15" height="15"/><path d="M4 4l3 3M13 4l-3 3M4 13l3-3M13 13l-3-3"/></svg>
</div>
</body></html>
